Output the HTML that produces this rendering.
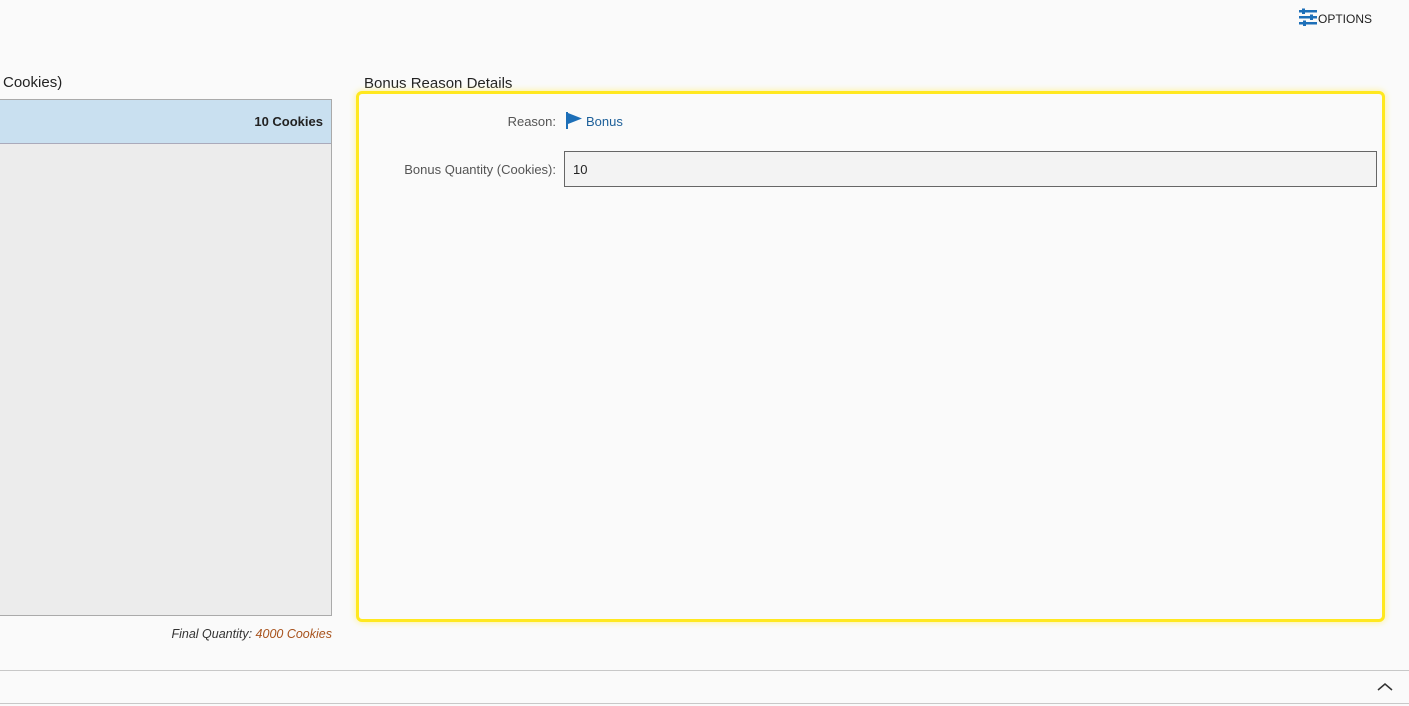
<!DOCTYPE html>
<html><head><meta charset="utf-8"><style>
body{margin:0;width:1409px;height:706px;background:#fafafa;font-family:"Liberation Sans",sans-serif;position:relative;overflow:hidden;color:#222}
.a{position:absolute}
</style></head><body>
<svg class="a" style="left:1299px;top:8px" width="18" height="18" viewBox="0 0 18 18"><g fill="#1d6fb8"><rect x="0" y="2" width="18" height="2.5"/><rect x="0" y="8" width="18" height="2.5"/><rect x="0" y="14" width="18" height="2.5"/><rect x="3" y="0.5" width="3" height="5.5"/><rect x="11" y="6.5" width="3" height="5.5"/><rect x="4" y="12.5" width="3" height="5.5"/></g></svg>
<div class="a" style="left:1318px;top:12px;font-size:12px;color:#222">OPTIONS</div>
<div class="a" style="left:3px;top:74px;font-size:15px">Cookies)</div>
<div class="a" style="left:0;top:99px;width:331px;height:515px;background:#ececec;border:1px solid #aaa;border-left:none"></div>
<div class="a" style="left:0;top:100px;width:331px;height:43px;background:#c9e0f0;border-bottom:1px solid #aab"></div>
<div class="a" style="right:1086px;top:114px;font-size:13px;font-weight:bold;color:#222">10 Cookies</div>
<div class="a" style="right:1077px;top:627px;font-size:12.5px;font-style:italic;color:#333;white-space:nowrap">Final Quantity: <span style="color:#a8531d">4000 Cookies</span></div>
<div class="a" style="left:364px;top:75px;font-size:15px">Bonus Reason Details</div>
<div class="a" style="left:356px;top:91px;width:1023px;height:525px;border:3px solid #ffe81f;border-radius:6px;box-shadow:0 0 7px #fff08a;background:#fafafa"></div>
<div class="a" style="right:853px;top:114px;font-size:13px;color:#555">Reason:</div>
<svg class="a" style="left:566px;top:112px" width="18" height="18" viewBox="0 0 18 18"><rect x="0" y="0" width="2" height="17" fill="#1d6fb8"/><path d="M2 1 L16 6.5 L2 12Z" fill="#1d6fb8"/></svg>
<div class="a" style="left:586px;top:114px;font-size:13px;color:#1d5f99">Bonus</div>
<div class="a" style="right:853px;top:162px;font-size:13px;color:#555">Bonus Quantity (Cookies):</div>
<div class="a" style="left:564px;top:151px;width:811px;height:34px;border:1px solid #666;background:#f3f3f3"></div>
<div class="a" style="left:573px;top:162px;font-size:13px">10</div>
<div class="a" style="left:0;top:670px;width:1409px;height:1px;background:#c8c8c8"></div>
<div class="a" style="left:0;top:703px;width:1409px;height:1px;background:#c8c8c8"></div>
<svg class="a" style="left:1377px;top:682px" width="16" height="10" viewBox="0 0 16 10"><path d="M1 8 L8 2 L15 8" stroke="#333" stroke-width="1.5" fill="none"/></svg>
</body></html>
